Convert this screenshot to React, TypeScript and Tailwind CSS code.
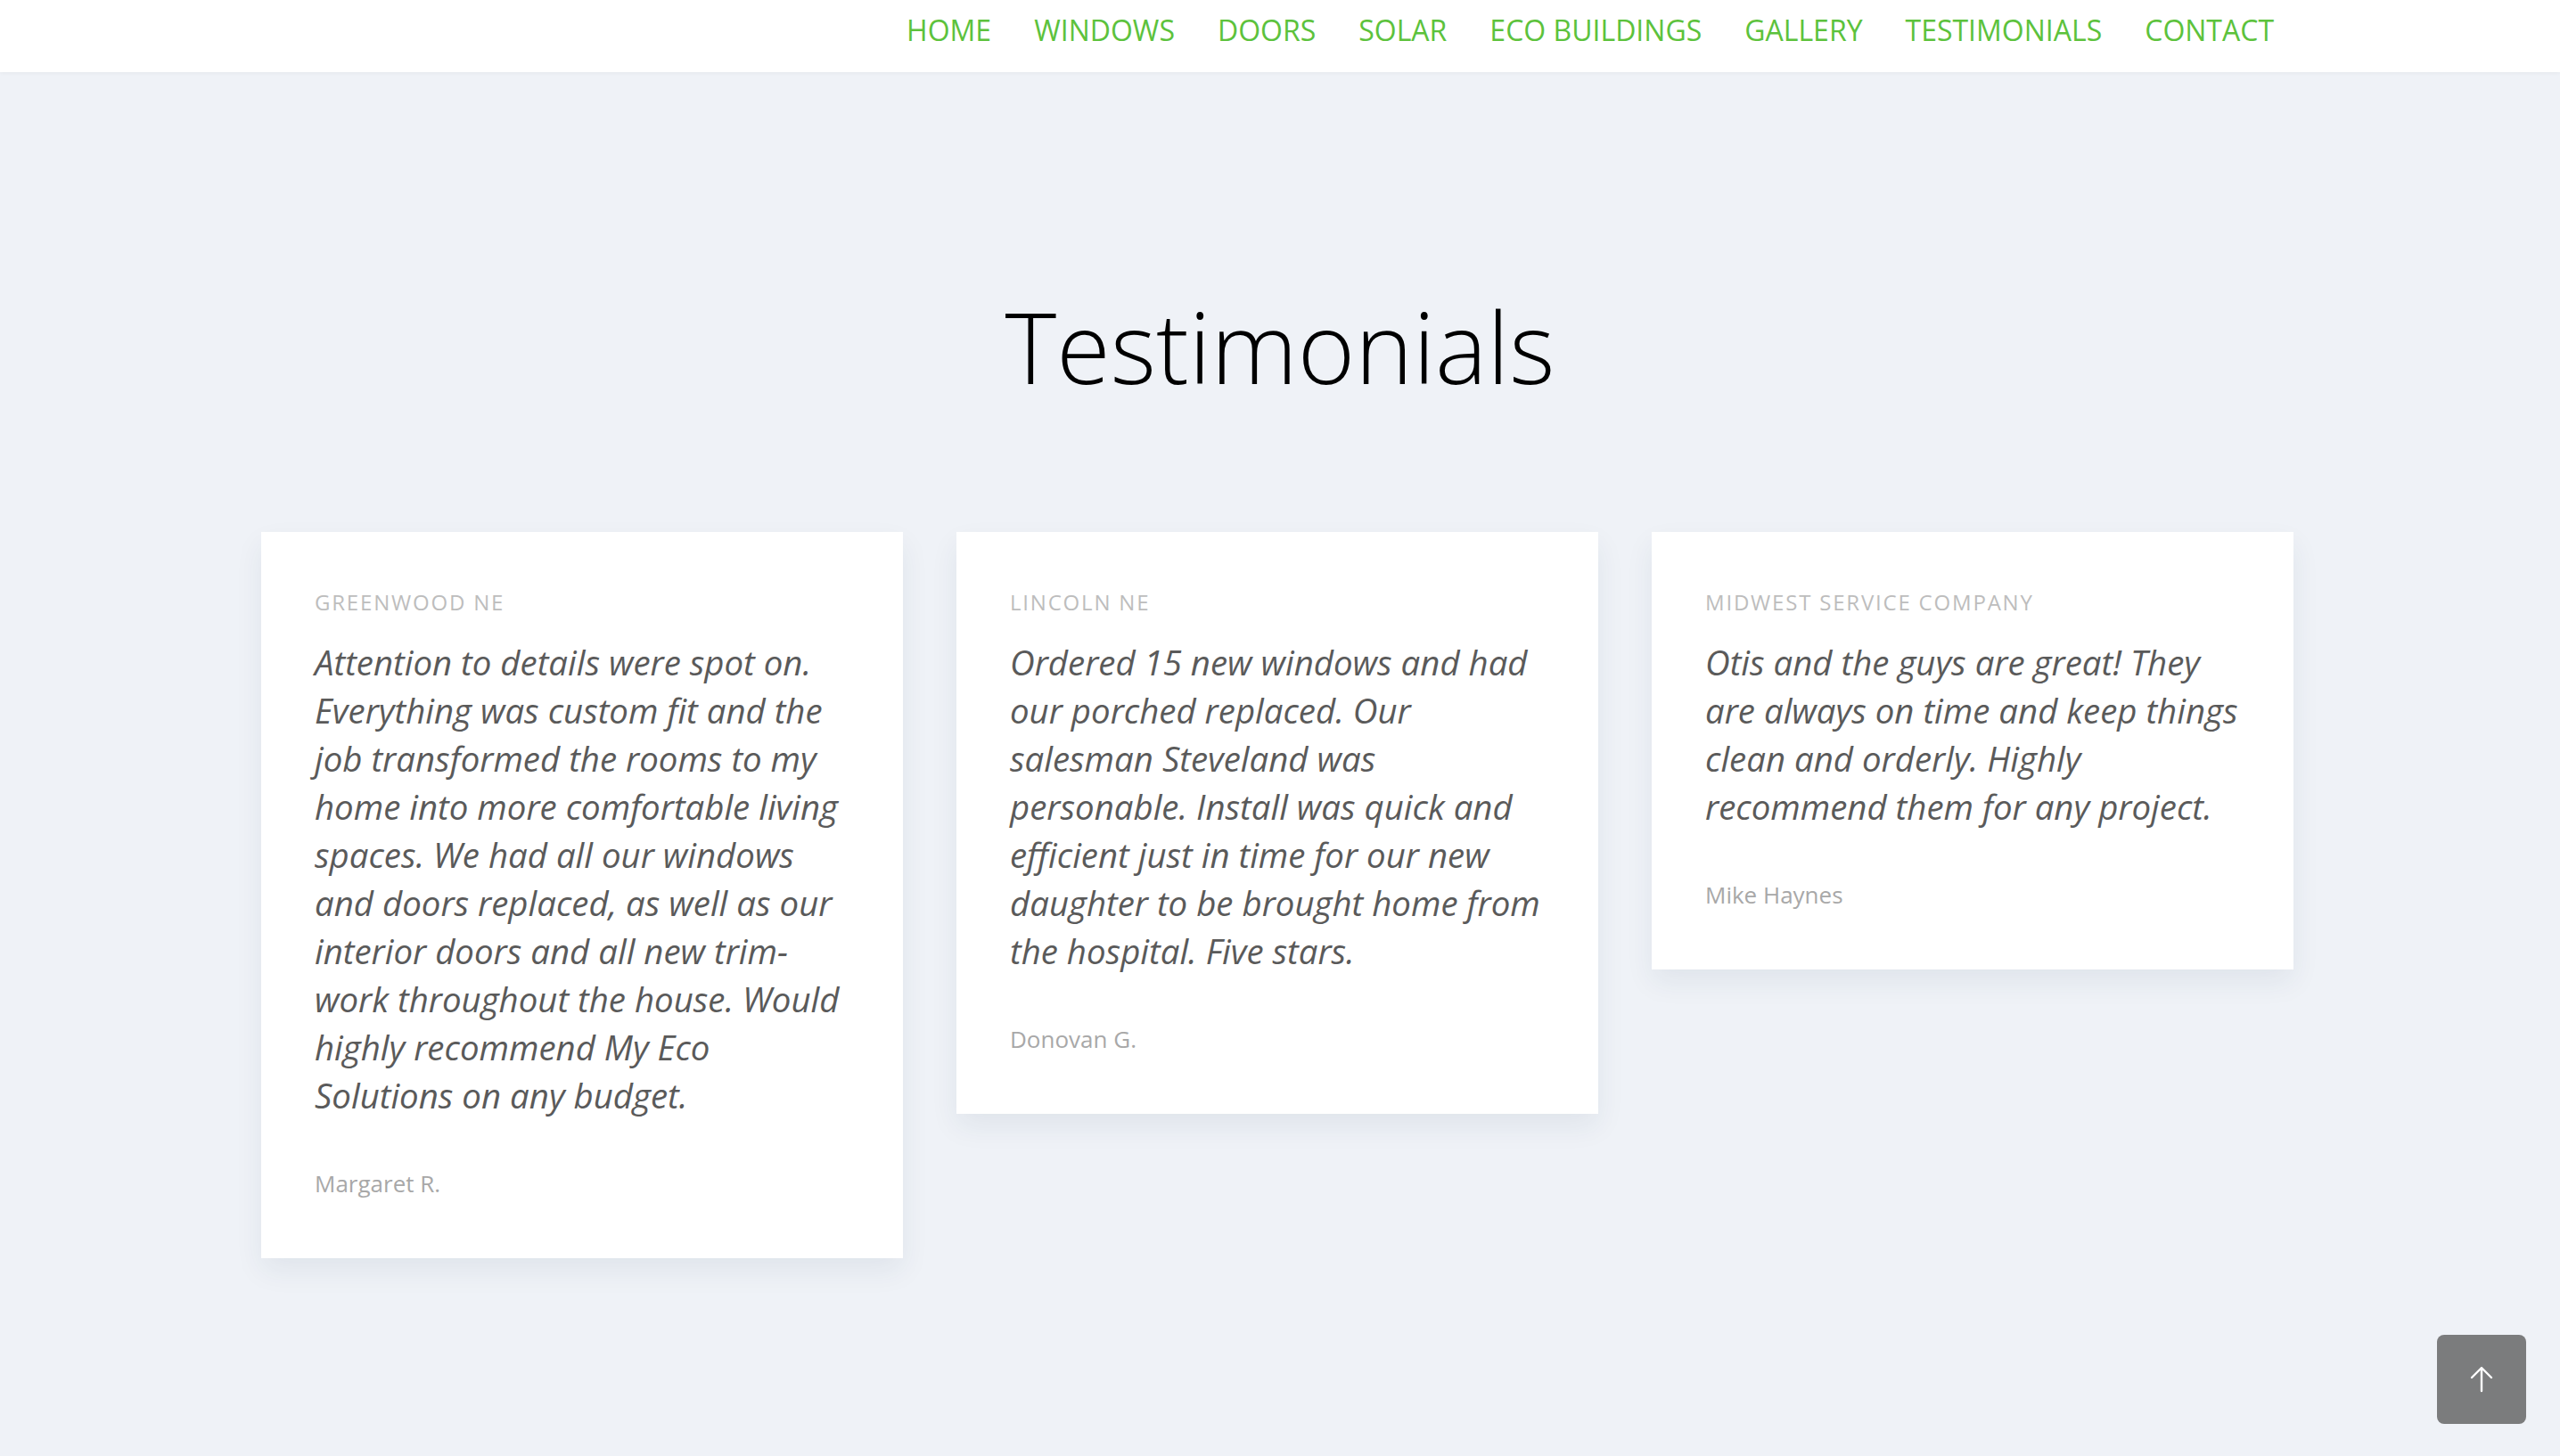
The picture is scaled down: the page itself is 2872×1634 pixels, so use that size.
import React from 'react';

const links = ['HOME', 'WINDOWS', 'DOORS', 'SOLAR', 'ECO BUILDINGS', 'GALLERY', 'TESTIMONIALS', 'CONTACT'];

const testimonials = [
  {
    place: 'GREENWOOD NE',
    quote:
      'Attention to details were spot on. Everything was custom fit and the job transformed the rooms to my home into more comfortable living spaces. We had all our windows and doors replaced, as well as our interior doors and all new trim-work throughout the house. Would highly recommend My Eco Solutions on any budget.',
    author: 'Margaret R.',
  },
  {
    place: 'LINCOLN NE',
    quote:
      'Ordered 15 new windows and had our porched replaced. Our salesman Steveland was personable. Install was quick and efficient just in time for our new daughter to be brought home from the hospital. Five stars.',
    author: 'Donovan G.',
  },
  {
    place: 'MIDWEST SERVICE COMPANY',
    quote:
      'Otis and the guys are great! They are always on time and keep things clean and orderly. Highly recommend them for any project.',
    author: 'Mike Haynes',
  },
];

const App: React.FC = () => {
  return (
    <div className="min-h-screen bg-[#eff2f7] font-['Open_Sans',sans-serif]">
      <header className="h-[81px] bg-white shadow-[0_1px_4px_rgba(0,0,0,0.05)]">
        <nav className="w-[2280px] ml-[295px] h-full flex items-center justify-end pb-[14px]">
          {links.map((l) => (
            <a key={l} href="#" className="px-[24px] text-[32px] leading-none text-[#5cc23c] whitespace-nowrap">
              {l}
            </a>
          ))}
        </nav>
      </header>

      <section className="pt-[241px] pb-[160px]">
        <h2 className="text-center text-[110px] leading-[1.2] font-light text-black">Testimonials</h2>

        <div className="w-[2280px] ml-[293px] mt-[143px] grid grid-cols-3 gap-[60px] items-start">
          {testimonials.map((t) => (
            <div key={t.place} className="bg-white px-[60px] pt-[62px] pb-[64px] shadow-[0_14px_30px_rgba(30,50,90,0.07)]">
              <p className="text-[24px] leading-[33px] tracking-[0.075em] text-[#bdbdbd]">{t.place}</p>
              <p className="mt-[24px] text-[38.4px] leading-[54px] italic text-[#5a5a5a]">{t.quote}</p>
              <p className="mt-[53px] text-[26px] leading-[39px] text-[#a8a8a8]">{t.author}</p>
            </div>
          ))}
        </div>
      </section>

      <button className="fixed right-[38px] bottom-[36px] w-[100px] h-[100px] rounded-[8px] bg-[#7b7c7d] flex items-center justify-center">
        <svg width="28" height="30" viewBox="0 0 28 30" fill="none" stroke="white" strokeWidth="2.4" strokeLinecap="round" strokeLinejoin="round">
          <path d="M14 28V3M3 13L14 2l11 11" />
        </svg>
      </button>
    </div>
  );
};

export default App;
